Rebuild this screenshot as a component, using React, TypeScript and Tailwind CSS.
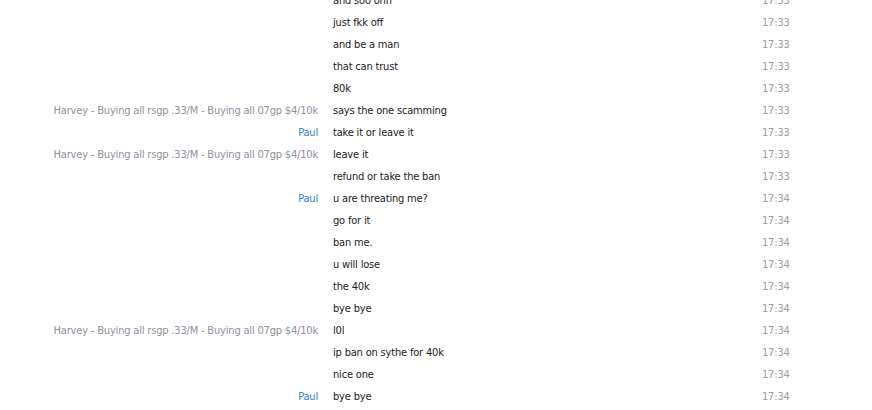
import React from "react";

type Msg = { who?: "h" | "p"; text: string; time: string };

const HARVEY = "Harvey - Buying all rsgp .33/M - Buying all 07gp $4/10k";

const msgs: Msg[] = [
  { text: "and soo ohh", time: "17:33" },
  { text: "just fkk off", time: "17:33" },
  { text: "and be a man", time: "17:33" },
  { text: "that can trust", time: "17:33" },
  { text: "80k", time: "17:33" },
  { who: "h", text: "says the one scamming", time: "17:33" },
  { who: "p", text: "take it or leave it", time: "17:33" },
  { who: "h", text: "leave it", time: "17:33" },
  { text: "refund or take the ban", time: "17:33" },
  { who: "p", text: "u are threating me?", time: "17:34" },
  { text: "go for it", time: "17:34" },
  { text: "ban me.", time: "17:34" },
  { text: "u will lose", time: "17:34" },
  { text: "the 40k", time: "17:34" },
  { text: "bye bye", time: "17:34" },
  { who: "h", text: "l0l", time: "17:34" },
  { text: "ip ban on sythe for 40k", time: "17:34" },
  { text: "nice one", time: "17:34" },
  { who: "p", text: "bye bye", time: "17:34" },
];

export default function App() {
  return (
    <div
      className="w-[872px] h-[410px] overflow-hidden bg-white text-[11px] tracking-[-0.18px]"
      style={{ fontFamily: '"DejaVu Sans Condensed", "DejaVu Sans", sans-serif' }}
    >
      <div className="-mt-[11px] flex flex-col">
        {msgs.map((m, i) => (
          <div key={i} className="flex h-[22px] items-center leading-none">
            <div
              className={
                "w-[318px] shrink-0 text-right whitespace-nowrap " +
                (m.who === "p" ? "text-[#2b84d2]" : "text-[#8f8f9c]")
              }
            >
              {m.who === "h" ? HARVEY : m.who === "p" ? "Paul" : ""}
            </div>
            <div className="ml-[15px] w-[429px] shrink-0 text-[#1a1a1a] whitespace-nowrap">{m.text}</div>
            <div className="text-[#9c9ca8]">{m.time}</div>
          </div>
        ))}
      </div>
    </div>
  );
}
